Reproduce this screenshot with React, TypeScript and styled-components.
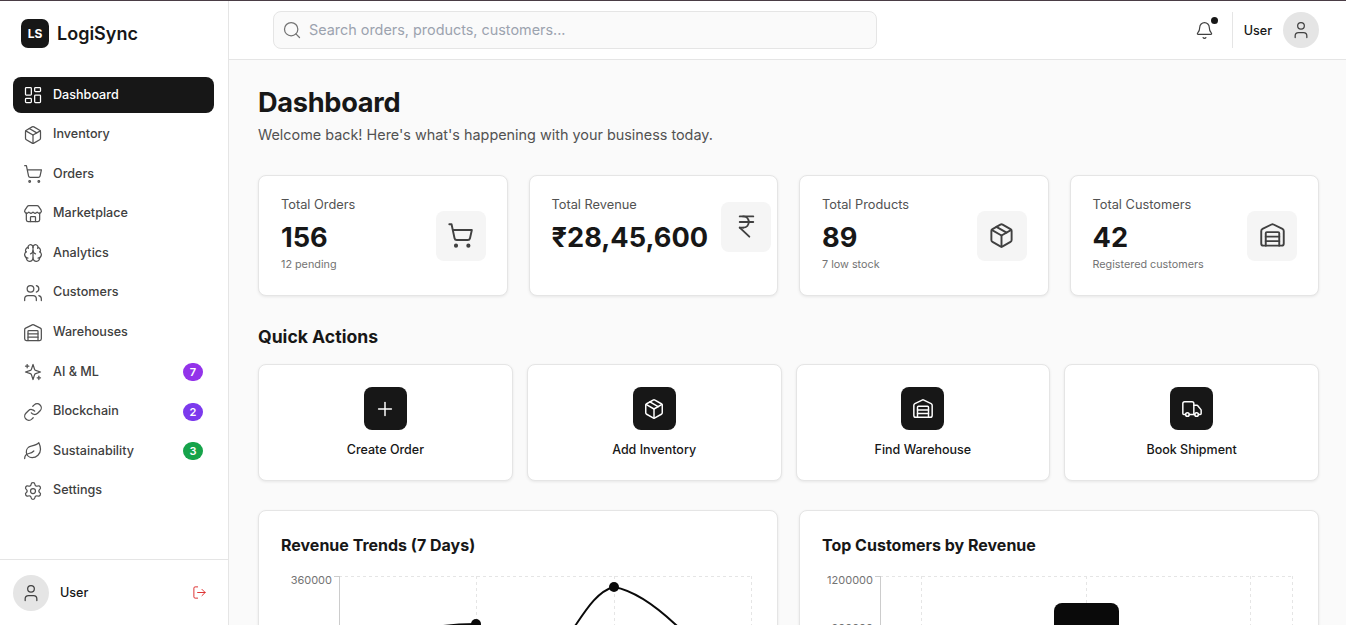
import React from 'react';
import styled, { createGlobalStyle } from 'styled-components';
import {
  Bell,
  Brain,
  IndianRupee,
  LayoutDashboard,
  Leaf,
  Link,
  LogOut,
  Package,
  Plus,
  Search,
  Settings,
  ShoppingCart,
  Store,
  Truck,
  User,
  Users,
  Warehouse,
} from 'lucide-react';

const GlobalStyle = createGlobalStyle`
  * { box-sizing: border-box; }
  html, body { margin: 0; height: 100%; overflow: hidden; }
  body {
    font-family: Inter, "Liberation Sans", sans-serif;
    background: #fafafa;
    color: #171717;
  }
`;

const Shell = styled.div`
  display: flex;
  height: 625px;
  border-top: 1px solid #4a3d45;
  overflow: hidden;
`;

const Sidebar = styled.aside`
  flex: 0 0 229px;
  display: flex;
  flex-direction: column;
  background: #fff;
  border-right: 1px solid #e5e5e5;
`;

const Brand = styled.div`
  display: flex;
  align-items: center;
  gap: 8px;
  height: 60px;
  padding: 4px 0 0 21px;
  font-size: 18px;
  font-weight: 600;
`;

const LogoMark = styled.div`
  width: 28px;
  height: 29px;
  border-radius: 7px;
  background: #171717;
  color: #fff;
  display: flex;
  align-items: center;
  justify-content: center;
  font-size: 12px;
  font-weight: 700;
`;

const Nav = styled.nav`
  flex: 1;
  display: flex;
  flex-direction: column;
  gap: 3.6px;
  padding: 16px 14px 0 13px;
`;

const NavRow = styled.div<{ $active?: boolean }>`
  display: flex;
  align-items: center;
  gap: 10px;
  height: 36px;
  padding: 0 11px 0 10px;
  border-radius: 8px;
  font-size: 12.6px;
  font-weight: 500;
  background: ${(p) => (p.$active ? '#171717' : 'transparent')};
  color: ${(p) => (p.$active ? '#fff' : '#404040')};
  svg { color: ${(p) => (p.$active ? '#fff' : '#525252')}; flex: none; }
`;

const NavLabel = styled.span`
  flex: 1;
  padding-bottom: 2px;
`;

const Count = styled.span<{ $color: string }>`
  min-width: 20px;
  height: 18px;
  padding: 0 6px;
  border-radius: 9px;
  background: ${(p) => p.$color};
  color: #fff;
  font-size: 11px;
  font-weight: 600;
  display: flex;
  align-items: center;
  justify-content: center;
`;

const SideFoot = styled.div`
  height: 66px;
  border-top: 1px solid #e5e5e5;
  display: flex;
  align-items: center;
  gap: 11px;
  padding: 0 21px 0 13px;
`;

const Avatar = styled.div`
  width: 36px;
  height: 36px;
  border-radius: 50%;
  background: #e5e5e5;
  color: #404040;
  display: flex;
  align-items: center;
  justify-content: center;
  flex: none;
`;

const UserName = styled.span`
  flex: 1;
  font-size: 12.6px;
  font-weight: 500;
  padding-bottom: 1px;
`;

const Column = styled.div`
  flex: 1;
  min-width: 0;
  display: flex;
  flex-direction: column;
`;

const TopBar = styled.header`
  height: 59px;
  flex: none;
  background: #fff;
  border-bottom: 1px solid #e5e5e5;
  display: flex;
  align-items: center;
  justify-content: space-between;
  padding: 0 27px 0 44px;
`;

const SearchBox = styled.div`
  width: 604px;
  height: 38px;
  border: 1px solid #e5e5e5;
  border-radius: 8px;
  background: #fafafa;
  display: flex;
  align-items: center;
  gap: 7px;
  padding: 0 8px;
  color: #737373;
  font-size: 14.4px;
  span { color: #9ca3af; padding-bottom: 2px; }
`;

const TopRight = styled.div`
  display: flex;
  align-items: center;
`;

const BellWrap = styled.div`
  position: relative;
  display: flex;
  color: #404040;
  margin-right: 18px;
`;

const BellDot = styled.i`
  position: absolute;
  top: -4px;
  right: -4px;
  width: 7px;
  height: 7px;
  border-radius: 50%;
  background: #171717;
`;

const TopUser = styled.div`
  display: flex;
  align-items: center;
  gap: 11px;
  height: 36px;
  padding-left: 11px;
  border-left: 1px solid #e5e5e5;
  font-size: 12.6px;
  font-weight: 500;
`;

const Main = styled.main`
  flex: 1;
  padding: 26px 27px 0 29px;
  overflow: hidden;
`;

const PageTitle = styled.h1`
  margin: 0;
  font-size: 27.2px;
  line-height: 34px;
  font-weight: 700;
  letter-spacing: -0.3px;
`;

const PageSub = styled.p`
  margin: 5px 0 0;
  font-size: 14.4px;
  line-height: 20px;
  color: #525252;
`;

const Stats = styled.section`
  display: grid;
  grid-template-columns: repeat(4, minmax(0, 1fr));
  gap: 21px;
  margin-top: 30px;
`;

const Card = styled.div`
  background: #fff;
  border: 1px solid #e5e5e5;
  border-radius: 8px;
  box-shadow: 0 1px 3px rgba(0, 0, 0, 0.08);
`;

const StatCard = styled(Card)`
  height: 121px;
  display: flex;
  align-items: center;
  justify-content: space-between;
  padding: 0 21px 0 22px;
`;

const StatText = styled.div`
  align-self: flex-start;
  padding-top: 20px;
  min-width: 0;
`;

const StatLabel = styled.div`
  font-size: 12.8px;
  line-height: 18px;
  color: #525252;
`;

const StatValue = styled.div`
  margin-top: 6px;
  font-size: 27.2px;
  line-height: 36px;
  font-weight: 700;
  white-space: nowrap;
`;

const StatHint = styled.div`
  margin-top: 1px;
  font-size: 10.8px;
  line-height: 16px;
  color: #737373;
`;

const StatIcon = styled.div<{ $lift?: boolean }>`
  width: 50px;
  height: 50px;
  flex: none;
  border-radius: 8px;
  background: #f5f5f5;
  color: #404040;
  display: flex;
  align-items: center;
  justify-content: center;
  margin-top: ${(p) => (p.$lift ? '-18px' : '0')};
  margin-right: ${(p) => (p.$lift ? '-15px' : '0')};
`;

const SectionTitle = styled.h2`
  margin: 29px 0 15px;
  font-size: 17.6px;
  line-height: 24px;
  font-weight: 700;
`;

const Actions = styled.section`
  display: grid;
  grid-template-columns: repeat(4, minmax(0, 1fr));
  gap: 14px;
`;

const ActionCard = styled(Card)`
  height: 117px;
  display: flex;
  flex-direction: column;
  align-items: center;
  padding-top: 22px;
  font-size: 12.5px;
  font-weight: 500;
`;

const ActionIcon = styled.div`
  width: 43px;
  height: 43px;
  border-radius: 8px;
  background: #171717;
  color: #fff;
  display: flex;
  align-items: center;
  justify-content: center;
  margin-bottom: 12px;
`;

const Charts = styled.section`
  display: grid;
  grid-template-columns: repeat(2, minmax(0, 1fr));
  gap: 21px;
  margin-top: 29px;
`;

const ChartCard = styled(Card)`
  height: 360px;
  padding: 22px 22px 0;
`;

const ChartTitle = styled.h3`
  margin: 0 0 13px;
  font-size: 16px;
  line-height: 24px;
  font-weight: 700;
`;

const ChartSvg = styled.svg`
  display: block;
`;

const Axis = styled.text`
  font-family: Inter, "Liberation Sans", sans-serif;
  font-size: 11px;
  fill: #737373;
`;

// older lucide sparkles, the current one has its small marks elsewhere
const SparkleIcon = ({ size = 20, strokeWidth = 1.5 }: { size?: number; strokeWidth?: number }) => (
  <svg
    width={size}
    height={size}
    viewBox="0 0 24 24"
    fill="none"
    stroke="currentColor"
    strokeWidth={strokeWidth}
    strokeLinecap="round"
    strokeLinejoin="round"
  >
    <path d="m12 3-1.912 5.813a2 2 0 0 1-1.275 1.275L3 12l5.813 1.912a2 2 0 0 1 1.275 1.275L12 21l1.912-5.813a2 2 0 0 1 1.275-1.275L21 12l-5.813-1.912a2 2 0 0 1-1.275-1.275L12 3Z" />
    <path d="M5 3v4" />
    <path d="M19 17v4" />
    <path d="M3 5h4" />
    <path d="M17 19h4" />
  </svg>
);

const navItems = [
  { label: 'Dashboard', icon: LayoutDashboard, active: true },
  { label: 'Inventory', icon: Package },
  { label: 'Orders', icon: ShoppingCart },
  { label: 'Marketplace', icon: Store },
  { label: 'Analytics', icon: Brain },
  { label: 'Customers', icon: Users },
  { label: 'Warehouses', icon: Warehouse },
  { label: 'AI & ML', icon: SparkleIcon, count: '7', color: '#9333ea' },
  { label: 'Blockchain', icon: Link, count: '2', color: '#7c3aed' },
  { label: 'Sustainability', icon: Leaf, count: '3', color: '#16a34a' },
  { label: 'Settings', icon: Settings },
];

const stats = [
  { label: 'Total Orders', value: '156', hint: '12 pending', icon: ShoppingCart },
  { label: 'Total Revenue', value: '₹28,45,600', hint: '', icon: IndianRupee, lift: true },
  { label: 'Total Products', value: '89', hint: '7 low stock', icon: Package },
  { label: 'Total Customers', value: '42', hint: 'Registered customers', icon: Warehouse },
];

const actions = [
  { label: 'Create Order', icon: Plus },
  { label: 'Add Inventory', icon: Package },
  { label: 'Find Warehouse', icon: Warehouse },
  { label: 'Book Shipment', icon: Truck },
];

const Grid = ({ xs }: { xs: number[] }) => (
  <g stroke="#e5e5e5" strokeDasharray="3 3" fill="none">
    <line x1="58" y1="0.5" x2="470" y2="0.5" />
    {xs.map((x) => (
      <line key={x} x1={x + 0.5} y1="0" x2={x + 0.5} y2="200" />
    ))}
  </g>
);

const YAxis = () => (
  <g stroke="#ccc">
    <line x1="58.5" y1="0" x2="58.5" y2="200" />
    <line x1="53" y1="0.5" x2="58" y2="0.5" />
  </g>
);

export default function App() {
  return (
    <Shell>
      <GlobalStyle />
      <Sidebar>
        <Brand>
          <LogoMark>LS</LogoMark>
          LogiSync
        </Brand>
        <Nav>
          {navItems.map(({ label, icon: Icon, active, count, color }) => (
            <NavRow key={label} $active={active}>
              <Icon size={20} strokeWidth={1.5} />
              <NavLabel>{label}</NavLabel>
              {count && <Count $color={color as string}>{count}</Count>}
            </NavRow>
          ))}
        </Nav>
        <SideFoot>
          <Avatar>
            <User size={20} strokeWidth={1.5} />
          </Avatar>
          <UserName>User</UserName>
          <LogOut size={15} color="#dc2626" strokeWidth={1.5} />
        </SideFoot>
      </Sidebar>
      <Column>
        <TopBar>
          <SearchBox>
            <Search size={20} strokeWidth={1.5} />
            <span>Search orders, products, customers...</span>
          </SearchBox>
          <TopRight>
            <BellWrap>
              <Bell size={19} strokeWidth={1.5} />
              <BellDot />
            </BellWrap>
            <TopUser>
              User
              <Avatar>
                <User size={20} strokeWidth={1.5} />
              </Avatar>
            </TopUser>
          </TopRight>
        </TopBar>
        <Main>
          <PageTitle>Dashboard</PageTitle>
          <PageSub>Welcome back! Here's what's happening with your business today.</PageSub>
          <Stats>
            {stats.map(({ label, value, hint, icon: Icon, lift }) => (
              <StatCard key={label}>
                <StatText>
                  <StatLabel>{label}</StatLabel>
                  <StatValue>{value}</StatValue>
                  {hint && <StatHint>{hint}</StatHint>}
                </StatText>
                <StatIcon $lift={lift}>
                  <Icon size={27} strokeWidth={1.7} />
                </StatIcon>
              </StatCard>
            ))}
          </Stats>
          <SectionTitle>Quick Actions</SectionTitle>
          <Actions>
            {actions.map(({ label, icon: Icon }) => (
              <ActionCard key={label}>
                <ActionIcon>
                  <Icon size={22} strokeWidth={1.6} />
                </ActionIcon>
                {label}
              </ActionCard>
            ))}
          </Actions>
          <Charts>
            <ChartCard>
              <ChartTitle>Revenue Trends (7 Days)</ChartTitle>
              <ChartSvg width="474" height="206" viewBox="0 -6 474 206">
                <Grid xs={[195, 333, 470]} />
                <YAxis />
                <Axis x="51" y="8" textAnchor="end">360000</Axis>
                <path
                  d="M150 52 C165 49 180 48 195 48 C225 70 250 85 268 78 C292 66 305 18 333 11 C355 15 378 33 395 49 C410 63 425 80 440 95"
                  fill="none"
                  stroke="#0a0a0a"
                  strokeWidth="2"
                />
                <circle cx="195" cy="48" r="5" fill="#0a0a0a" />
                <circle cx="333" cy="11" r="5" fill="#0a0a0a" />
              </ChartSvg>
            </ChartCard>
            <ChartCard>
              <ChartTitle>Top Customers by Revenue</ChartTitle>
              <ChartSvg width="474" height="206" viewBox="0 -6 474 206">
                <Grid xs={[99, 264, 428, 470]} />
                <YAxis />
                <Axis x="51" y="8" textAnchor="end">1200000</Axis>
                <Axis x="51" y="56" textAnchor="end">900000</Axis>
                <path d="M232 200 V35 a8 8 0 0 1 8 -8 h49 a8 8 0 0 1 8 8 V200 Z" fill="#0a0a0a" />
              </ChartSvg>
            </ChartCard>
          </Charts>
        </Main>
      </Column>
    </Shell>
  );
}
